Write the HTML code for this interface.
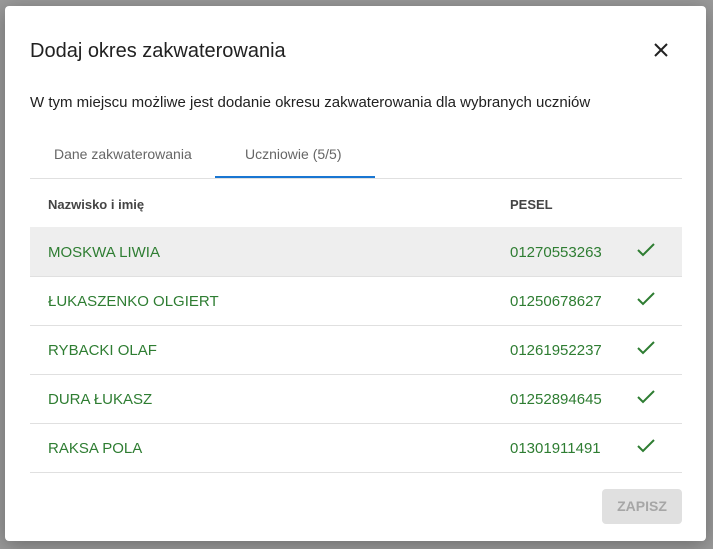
<!DOCTYPE html>
<html><head><style>
body{margin:0;width:713px;height:549px;background:#9a9a9a;font-family:"Liberation Sans",sans-serif;position:relative;overflow:hidden}
.d{position:absolute;left:5px;top:6px;width:701px;height:535px;background:#fff;border-radius:4px;box-shadow:0 4px 20px rgba(0,0,0,.3)}
.t{position:absolute;left:25px;top:34px;font-size:20px;color:#212121}
.x{position:absolute;left:649px;top:37px}
.s{position:absolute;left:25px;top:88px;font-size:15px;color:#212121}
.tab{position:absolute;top:140px;font-size:14px;color:#666}
.ul{position:absolute;left:210px;top:170px;width:160px;height:2px;background:#1976d2}
.ln{position:absolute;left:25px;width:652px;height:1px;background:#e0e0e0}
.r{position:absolute;left:25px;width:652px;height:49px;font-size:15px;color:#2e7d32}
.r span{position:absolute;top:17px}
.h{font-size:13px;font-weight:bold;color:#444}
.b{position:absolute;left:597px;top:483px;width:80px;height:35px;background:#e0e0e0;border-radius:4px;color:#a6a6a6;font-size:14px;font-weight:bold;text-align:center;line-height:35px}
</style></head><body>
<div class="d">
<div class="t">Dodaj okres zakwaterowania</div>
<svg class="x" width="14" height="14" viewBox="0 0 14 14"><path d="M1 1L13 13M13 1L1 13" stroke="#222" stroke-width="2"/></svg>
<div class="s">W tym miejscu możliwe jest dodanie okresu zakwaterowania dla wybranych uczniów</div>
<div class="tab" style="left:49px">Dane zakwaterowania</div>
<div class="tab" style="left:240px">Uczniowie (5/5)</div>
<div class="ln" style="top:172px"></div>
<div class="ul"></div>
<div class="r h" style="top:172px"><span style="left:18px;top:19px">Nazwisko i imię</span><span style="left:480px;top:19px">PESEL</span></div>
<div class="r" style="top:221px;background:#eee"><span style="left:18px">MOSKWA LIWIA</span><span style="left:480px">01270553263</span><svg style="position:absolute;left:606px;top:15px" width="20" height="16"><path d="M2 8L7 13L18 2" stroke="#2e7d32" stroke-width="2" fill="none"/></svg></div>
<div class="ln" style="top:270px"></div>
<div class="r" style="top:270px"><span style="left:18px">ŁUKASZENKO OLGIERT</span><span style="left:480px">01250678627</span><svg style="position:absolute;left:606px;top:15px" width="20" height="16"><path d="M2 8L7 13L18 2" stroke="#2e7d32" stroke-width="2" fill="none"/></svg></div>
<div class="ln" style="top:319px"></div>
<div class="r" style="top:319px"><span style="left:18px">RYBACKI OLAF</span><span style="left:480px">01261952237</span><svg style="position:absolute;left:606px;top:15px" width="20" height="16"><path d="M2 8L7 13L18 2" stroke="#2e7d32" stroke-width="2" fill="none"/></svg></div>
<div class="ln" style="top:368px"></div>
<div class="r" style="top:368px"><span style="left:18px">DURA ŁUKASZ</span><span style="left:480px">01252894645</span><svg style="position:absolute;left:606px;top:15px" width="20" height="16"><path d="M2 8L7 13L18 2" stroke="#2e7d32" stroke-width="2" fill="none"/></svg></div>
<div class="ln" style="top:417px"></div>
<div class="r" style="top:417px"><span style="left:18px">RAKSA POLA</span><span style="left:480px">01301911491</span><svg style="position:absolute;left:606px;top:15px" width="20" height="16"><path d="M2 8L7 13L18 2" stroke="#2e7d32" stroke-width="2" fill="none"/></svg></div>
<div class="ln" style="top:466px"></div>
<div class="b">ZAPISZ</div>
</div>
</body></html>
